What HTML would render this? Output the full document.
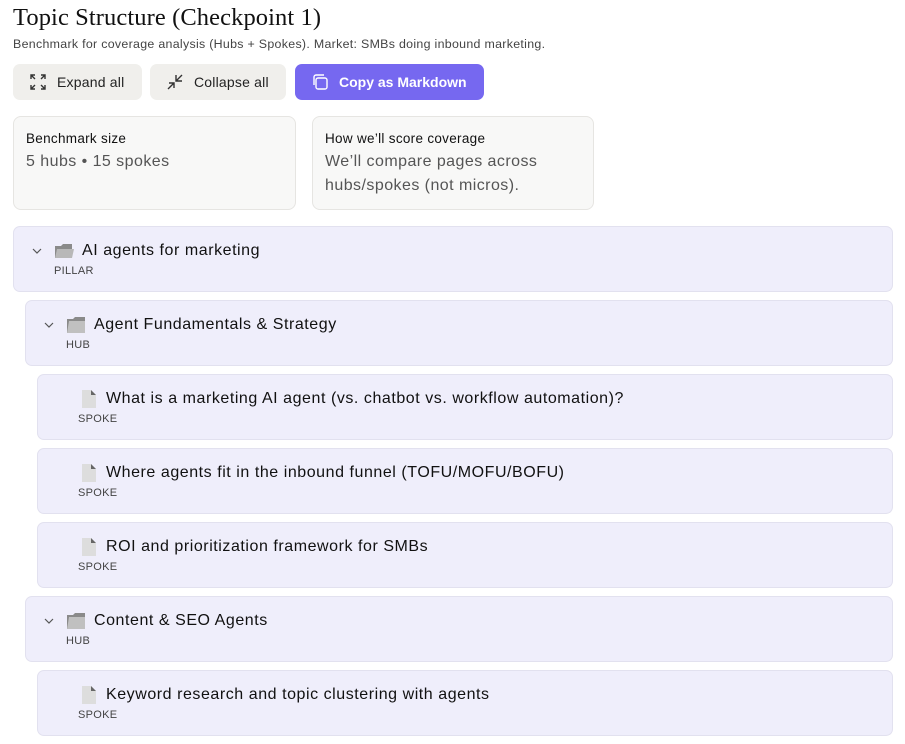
<!DOCTYPE html>
<html><head><meta charset="utf-8"><style>
*{box-sizing:border-box;margin:0;padding:0}
body{width:905px;height:744px;overflow:hidden;background:#fff;font-family:"Liberation Sans",sans-serif;color:#1a1a1a;position:relative}
.a{position:absolute}
h1{position:absolute;left:13px;top:4px;font-family:"Liberation Serif",serif;font-weight:400;font-size:24.5px;color:#111;letter-spacing:0.1px}
.sub{left:13px;top:37px;font-size:12.4px;color:#444;letter-spacing:0.3px}
.btn{top:64px;height:36px;border-radius:7px;background:#f0efec;font-size:14px;color:#222;display:flex;align-items:center;padding-left:16px;letter-spacing:0.2px}
.btn svg{margin-right:10px}
.card{top:116px;height:94px;border:1px solid #e6e5e2;border-radius:8px;background:#f8f8f7;padding:14px 12px}
.card .t{font-size:13.5px;color:#111;margin-bottom:4px;letter-spacing:0.3px}
.card .v{font-size:16px;color:#555;line-height:24px;letter-spacing:0.45px}
.row{height:66px;border:1px solid #e2e1ef;border-radius:7px;background:#efeefb;right:12px}
.row .tt{position:absolute;top:15px;font-size:16px;color:#111;letter-spacing:0.55px}
.row .lb{position:absolute;top:38px;font-size:11px;color:#444;letter-spacing:0.3px}
.row .ch{position:absolute;top:18px}
.row .ic{position:absolute;top:14px}
</style></head><body>
<h1>Topic Structure (Checkpoint 1)</h1>
<div class="a sub">Benchmark for coverage analysis (Hubs + Spokes). Market: SMBs doing inbound marketing.</div>
<div class="a btn" style="left:13px;width:129px"><svg width="18" height="18" viewBox="0 0 18 18" fill="none" stroke="#333" stroke-width="1.4"><path d="M2 6V2h4M2 2l4 4M16 6V2h-4M16 2l-4 4M2 12v4h4M2 16l4-4M16 12v4h-4M16 16l-4-4"/></svg>Expand all</div>
<div class="a btn" style="left:150px;width:136px"><svg width="18" height="18" viewBox="0 0 18 18" fill="none" stroke="#333" stroke-width="1.4"><path d="M10 2v6h6M10 8l6-6M2 16l6-6M3 10h5v5"/></svg>Collapse all</div>
<div class="a btn" style="left:295px;width:189px;background:#7668f0;color:#fff;font-weight:700;font-size:14px;letter-spacing:0"><svg width="18" height="18" viewBox="0 0 18 18" fill="none" stroke="#fff" stroke-width="1.4"><rect x="5" y="5" width="11" height="11" rx="2"/><path d="M3 12V4a2 2 0 0 1 2-2h8"/></svg>Copy as Markdown</div>
<div class="a card" style="left:13px;width:283px"><div class="t">Benchmark size</div><div class="v">5 hubs • 15 spokes</div></div>
<div class="a card" style="left:312px;width:282px"><div class="t">How we’ll score coverage</div><div class="v">We’ll compare pages across hubs/spokes (not micros).</div></div>

<div class="a row" style="left:13px;top:226px">
<svg class="ch" style="left:17px" width="12" height="12" viewBox="0 0 12 12" fill="none" stroke="#555" stroke-width="1.2"><path d="M2 4l4 4 4-4"/></svg>
<svg class="ic" style="left:40px" width="21" height="20" viewBox="0 0 21 20"><path d="M1 5h6l2-2h9v14H1z" fill="#8a8a8a"/><path d="M3 8h17l-2 9H1z" fill="#b8b8b8"/></svg>
<div class="tt" style="left:68px">AI agents for marketing</div><div class="lb" style="left:40px">PILLAR</div></div>

<div class="a row" style="left:25px;top:300px">
<svg class="ch" style="left:17px" width="12" height="12" viewBox="0 0 12 12" fill="none" stroke="#555" stroke-width="1.2"><path d="M2 4l4 4 4-4"/></svg>
<svg class="ic" style="left:40px" width="21" height="20" viewBox="0 0 21 20"><path d="M1 4h6l2-2h10v16H1z" fill="#8a8a8a"/><path d="M3 6h16v12H1z" fill="#c0c0c0"/></svg>
<div class="tt" style="left:68px">Agent Fundamentals &amp; Strategy</div><div class="lb" style="left:40px">HUB</div></div>

<div class="a row" style="left:37px;top:374px"><svg class="ic" style="left:42px" width="18" height="20" viewBox="0 0 18 20"><path d="M2 1h9l5 5v13H2z" fill="#ddd"/><path d="M11 1l5 5h-5z" fill="#666"/></svg><div class="tt" style="left:68px">What is a marketing AI agent (vs. chatbot vs. workflow automation)?</div><div class="lb" style="left:40px">SPOKE</div></div>
<div class="a row" style="left:37px;top:448px"><svg class="ic" style="left:42px" width="18" height="20" viewBox="0 0 18 20"><path d="M2 1h9l5 5v13H2z" fill="#ddd"/><path d="M11 1l5 5h-5z" fill="#666"/></svg><div class="tt" style="left:68px">Where agents fit in the inbound funnel (TOFU/MOFU/BOFU)</div><div class="lb" style="left:40px">SPOKE</div></div>
<div class="a row" style="left:37px;top:522px"><svg class="ic" style="left:42px" width="18" height="20" viewBox="0 0 18 20"><path d="M2 1h9l5 5v13H2z" fill="#ddd"/><path d="M11 1l5 5h-5z" fill="#666"/></svg><div class="tt" style="left:68px">ROI and prioritization framework for SMBs</div><div class="lb" style="left:40px">SPOKE</div></div>

<div class="a row" style="left:25px;top:596px">
<svg class="ch" style="left:17px" width="12" height="12" viewBox="0 0 12 12" fill="none" stroke="#555" stroke-width="1.2"><path d="M2 4l4 4 4-4"/></svg>
<svg class="ic" style="left:40px" width="21" height="20" viewBox="0 0 21 20"><path d="M1 4h6l2-2h10v16H1z" fill="#8a8a8a"/><path d="M3 6h16v12H1z" fill="#c0c0c0"/></svg>
<div class="tt" style="left:68px">Content &amp; SEO Agents</div><div class="lb" style="left:40px">HUB</div></div>

<div class="a row" style="left:37px;top:670px"><svg class="ic" style="left:42px" width="18" height="20" viewBox="0 0 18 20"><path d="M2 1h9l5 5v13H2z" fill="#ddd"/><path d="M11 1l5 5h-5z" fill="#666"/></svg><div class="tt" style="left:68px">Keyword research and topic clustering with agents</div><div class="lb" style="left:40px">SPOKE</div></div>
</body></html>
